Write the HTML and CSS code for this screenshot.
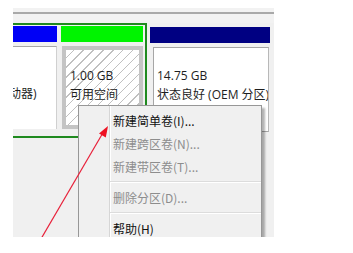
FILE: index.html
```html
<!DOCTYPE html>
<html lang="zh-CN">
<head>
<meta charset="utf-8">
<title>磁盘管理</title>
<link rel="stylesheet" href="styles.css">
</head>
<body>
<div class="panel">
  <div class="topbar"><div class="topline"></div></div>
  <div class="disk">
    <div class="ext">
      <div class="part p-blue">
        <div class="bar blue"></div>
        <div class="box plain">
          <div class="lbl">&nbsp;</div>
          <div class="lbl shift">驱动器)</div>
        </div>
      </div>
      <div class="part p-free">
        <div class="bar green"></div>
        <div class="box hatch">
          <div class="lbl">1.00 GB</div>
          <div class="lbl">可用空间</div>
        </div>
      </div>
    </div>
    <div class="part p-oem">
      <div class="bar navy"></div>
      <div class="box plain oem">
        <div class="lbl">14.75 GB</div>
        <div class="lbl">状态良好 (OEM 分区)</div>
      </div>
    </div>
  </div>

  <div class="menu">
    <div class="item">新建简单卷(I)...</div>
    <div class="item off">新建跨区卷(N)...</div>
    <div class="item off">新建带区卷(T)...</div>
    <div class="sep"></div>
    <div class="item off">删除分区(D)...</div>
    <div class="sep"></div>
    <div class="item">帮助(H)</div>
  </div>

  <svg class="arrow" width="261" height="229" viewBox="0 0 261 229">
    <line x1="25" y1="236" x2="91" y2="123" stroke="#e8213a" stroke-width="1.2"/>
    <polygon points="95,118 86,125.4 92.8,129.4" fill="#ee1122"/>
  </svg>
</div>
</body>
</html>
```

FILE: styles.css
```css
html, body {
  margin: 0;
  padding: 0;
  background: #ffffff;
}

body {
  width: 353px;
  height: 253px;
  overflow: hidden;
  font-family: "Noto Sans CJK SC", "Noto Sans", sans-serif;
  font-size: 12px;
  color: #1e1e1e;
}

.panel {
  position: relative;
  margin: 8px 0 0 13px;
  width: 261px;
  height: 229px;
  background: #f0f0f0;
  overflow: hidden;
}

.topbar {
  height: 15px;
  padding-top: 4px;
  box-sizing: border-box;
  background: #f2f2f2;
}

.topline {
  height: 2px;
  background: #a9a9a9;
}

.disk {
  display: flex;
  align-items: flex-start;
  height: 114px;
}

.ext {
  display: flex;
  gap: 4px;
  width: 130px;
  height: 107px;
  padding: 1px 2px 3px 0;
  border: 2px solid #1f8a1f;
  border-left: none;
}

.part {
  display: flex;
  flex-direction: column;
  gap: 4px;
}

.p-blue { width: 44px; }
.p-free { width: 82px; }

.p-oem {
  width: 120px;
  margin-left: 3px;
  padding-top: 4px;
}

.bar { height: 16px; }
.blue { background: #0000f6; }
.green { background: #00f400; }
.navy { background: #000082; }

.box {
  box-sizing: border-box;
  height: 83px;
  overflow: hidden;
  white-space: nowrap;
  line-height: 19px;
  font-family: "Open Sans", "Noto Sans CJK SC", sans-serif;
}

.plain {
  background: #ffffff;
  border-top: 1px solid #a6a6a6;
  border-right: 1px solid #d0d0d0;
  padding-top: 18px;
}

.shift { margin-left: -16px; }

.hatch {
  margin-left: 1px;
  border: 4px solid #c4c4c4;
  padding: 16px 0 0 4px;
  background: repeating-linear-gradient(135deg, #ffffff 0 5px, #c0c0c0 5px 6px, #ffffff 6px 7px);
}

.oem {
  margin-left: 3px;
  width: 116px;
  height: 85px;
  border-left: 1px solid #a6a6a6;
  border-right: 1px solid #b8b8b8;
  border-bottom: 1px solid #a6a6a6;
  padding-left: 3px;
}

.menu {
  position: absolute;
  left: 65px;
  top: 97px;
  width: 184px;
  box-sizing: border-box;
  padding: 3px 0 20px 0;
  background: #f0f0f0 linear-gradient(to right, transparent 30px, #d6d6d6 30px 31px, #ffffff 31px 32px, transparent 32px);
  border: 1px solid #979797;
  box-shadow: 3px 3px 2px rgba(0, 0, 0, 0.3);
}

.item {
  height: 23px;
  line-height: 23px;
  padding-left: 34px;
  color: #111111;
  white-space: nowrap;
}

.item.off { color: #8d8d8d; }

.sep {
  height: 8px;
  margin-left: 31px;
  background: linear-gradient(to bottom, transparent 3px, #dcdcdc 3px 4px, #ffffff 4px 5px, transparent 5px);
}

.arrow {
  position: absolute;
  left: 0;
  top: 0;
}
```
